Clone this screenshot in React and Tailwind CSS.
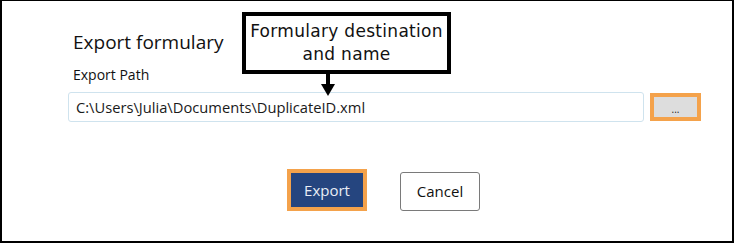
export default function App() {
  return (
    <div className="relative w-[734px] h-[243px] bg-white border-black border-l-2 border-r-2 border-b-2 border-t overflow-hidden" style={{ fontFamily: '"Open Sans", "Noto Sans", sans-serif' }}>
      <div className="pl-[66px] pt-[27px] flex flex-col">
        <div className="pl-[5px] text-[19px] leading-[28px] text-[#111]">Export formulary</div>
        <div className="pl-[5px] mt-[9px] text-[14px] leading-[20px] text-[#111]">Export Path</div>
        <div className="mt-[7px] flex items-center gap-[6px]">
          <div className="w-[576px] h-[30px] border border-[#cfe3ee] rounded-[3px] flex items-center pl-[7px] text-[14.7px] text-[#1a1a1a]">
            C:\Users\Julia\Documents\DuplicateID.xml
          </div>
          <div className="w-[51px] h-[28px] border-[4px] border-[#f4a24b] bg-[#dddddd] flex items-end justify-center pb-[2px] text-[10px] leading-[12px] text-[#222]">
            ...
          </div>
        </div>
        <div className="mt-[47px] flex items-end pl-[219px] gap-[33px]">
          <div className="w-[80px] h-[42px] border-[4px] border-[#f4a24b] bg-[#25457f] flex items-center justify-center text-[15px] text-[#e9eef6]">
            Export
          </div>
          <div className="w-[80px] h-[39px] border border-[#7a7a7a] rounded-[3px] bg-white flex items-center justify-center text-[15px] text-[#111]">
            Cancel
          </div>
        </div>
      </div>
      <div className="absolute left-[240px] top-[11px] w-[209px] h-[62px] border-[4px] border-black bg-white flex flex-col items-center justify-center text-[17px] leading-[23px] tracking-[0.3px] text-[#111]" style={{ fontFamily: '"DejaVu Sans", sans-serif' }}>
        <span>Formulary destination</span>
        <span>and name</span>
      </div>
      <svg className="absolute left-[318px] top-[72px]" width="16" height="23" viewBox="0 0 16 23">
        <rect x="6" y="0" width="4" height="12" fill="#000" />
        <polygon points="1,11 15,11 8,23" fill="#000" />
      </svg>
    </div>
  );
}
